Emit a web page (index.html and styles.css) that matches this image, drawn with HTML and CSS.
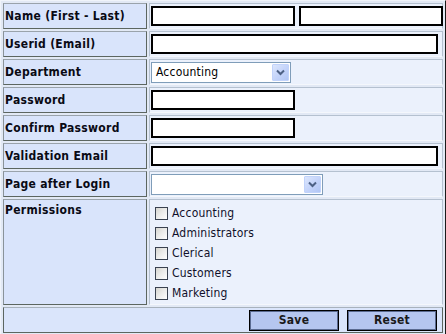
FILE: index.html
```html
<!DOCTYPE html>
<html>
<head>
<meta charset="utf-8">
<link rel="stylesheet" href="styles.css">
</head>
<body>
<table class="form">
  <tr class="row">
    <td class="label">Name (First - Last)</td>
    <td class="value"><div class="pair"><input class="text half" type="text"><input class="text half" type="text"></div></td>
  </tr>
  <tr class="row">
    <td class="label">Userid (Email)</td>
    <td class="value"><input class="text full" type="text"></td>
  </tr>
  <tr class="row">
    <td class="label">Department</td>
    <td class="value">
      <div class="combo dept">
        <span class="combo-text">Accounting</span>
        <span class="combo-btn"><svg width="9" height="7" viewBox="0 0 9 7"><path d="M1 1.5 L4.5 5 L8 1.5" fill="none" stroke="#4d6185" stroke-width="2"/></svg></span>
      </div>
    </td>
  </tr>
  <tr class="row">
    <td class="label">Password</td>
    <td class="value"><input class="text half" type="password"></td>
  </tr>
  <tr class="row">
    <td class="label">Confirm Password</td>
    <td class="value"><input class="text half" type="password"></td>
  </tr>
  <tr class="row">
    <td class="label">Validation Email</td>
    <td class="value"><input class="text full" type="text"></td>
  </tr>
  <tr class="row">
    <td class="label">Page after Login</td>
    <td class="value">
      <div class="combo page">
        <span class="combo-text"></span>
        <span class="combo-btn"><svg width="9" height="7" viewBox="0 0 9 7"><path d="M1 1.5 L4.5 5 L8 1.5" fill="none" stroke="#4d6185" stroke-width="2"/></svg></span>
      </div>
    </td>
  </tr>
  <tr class="perm-row">
    <td class="label top">Permissions</td>
    <td class="value top">
      <ul class="checks">
        <li><input type="checkbox" class="cb"><span>Accounting</span></li>
        <li><input type="checkbox" class="cb"><span>Administrators</span></li>
        <li><input type="checkbox" class="cb"><span>Clerical</span></li>
        <li><input type="checkbox" class="cb"><span>Customers</span></li>
        <li><input type="checkbox" class="cb"><span>Marketing</span></li>
      </ul>
    </td>
  </tr>
  <tr class="row">
    <td class="actions" colspan="2">
      <div class="buttons">
        <button class="btn">Save</button>
        <button class="btn">Reset</button>
      </div>
    </td>
  </tr>
</table>
</body>
</html>
```
FILE: styles.css
```css
html, body {
  margin: 0;
  padding: 0;
  background: #dfe7f4;
}

.form {
  width: 446px;
  border-collapse: separate;
  border-spacing: 2px;
  table-layout: fixed;
  background: #e2e9f5;
  border: 1px solid;
  border-color: #f0f4fa #1a1a1a #1a1a1a #f0f4fa;
  font-family: "DejaVu Sans Condensed", "DejaVu Sans", sans-serif;
  font-stretch: condensed;
  font-size: 12px;
  color: #000;
}

.row { height: 26px; }
.perm-row { height: 104px; }

td {
  padding: 1px;
  vertical-align: middle;
}

.label {
  width: 140px;
  background: #d9e4fb;
  border: 1px solid;
  border-color: #9aa3ab #5c6660 #5c6660 #8a9399;
  font-weight: bold;
  letter-spacing: 0.3px;
  white-space: nowrap;
  color: #0a0a14;
}

.value {
  background: #ebf1fc;
  border: 1px solid;
  border-color: #b5c1d0 #b5c1d0 #f4f7fc #b5c1d0;
}

.top { vertical-align: top; }
.label.top { padding-top: 3px; }

.pair {
  display: flex;
  gap: 4px;
}

.text {
  box-sizing: border-box;
  height: 20px;
  margin: 0;
  padding: 0 2px;
  border: 2px solid #000;
  background: #fff;
  display: block;
}

.half { width: 144px; }
.full { width: 287px; }

.combo {
  box-sizing: border-box;
  height: 21px;
  border: 1px solid #7f9db9;
  background: #fff;
  display: flex;
  align-items: center;
  justify-content: space-between;
  padding: 1px;
}
.dept { width: 140px; }
.page { width: 172px; }

.combo-text {
  padding-left: 3px;
  font-size: 12px;
  letter-spacing: 0.2px;
  color: #000;
}

.combo-btn {
  box-sizing: border-box;
  width: 17px;
  height: 17px;
  border: 1px solid #c1d3fb;
  border-radius: 1px;
  background: linear-gradient(135deg, #dce6fd 0%, #c3d3fa 55%, #b1c6f5 100%);
  display: flex;
  align-items: center;
  justify-content: center;
}

.checks {
  list-style: none;
  margin: 0;
  padding: 2px 0 0 4px;
}

.checks li {
  height: 20px;
  display: flex;
  align-items: center;
  gap: 4px;
  letter-spacing: 0.2px;
  color: #10102a;
}

.cb {
  appearance: none;
  -webkit-appearance: none;
  box-sizing: border-box;
  width: 13px;
  height: 13px;
  margin: 0;
  border: 1px solid #3a4250;
  background: linear-gradient(135deg, #d6d6d0 0%, #ececea 50%, #ffffff 100%);
}

.actions {
  background: #dae5fb;
  border: 1px solid;
  border-color: #a8b2bc #5c6660 #5c6660 #5c6660;
}

.buttons {
  display: flex;
  justify-content: flex-end;
  gap: 8px;
  padding-right: 4px;
}

.btn {
  box-sizing: border-box;
  width: 90px;
  height: 21px;
  margin: 0;
  padding: 0;
  border: 1px solid #000;
  box-shadow: inset 0 0 0 1px #5a6a90;
  background: #b5c6ef;
  font-family: "DejaVu Sans Condensed", "DejaVu Sans", sans-serif;
  font-stretch: condensed;
  font-weight: bold;
  font-size: 12px;
  letter-spacing: 0.3px;
  color: #1a1a1a;
}
```
